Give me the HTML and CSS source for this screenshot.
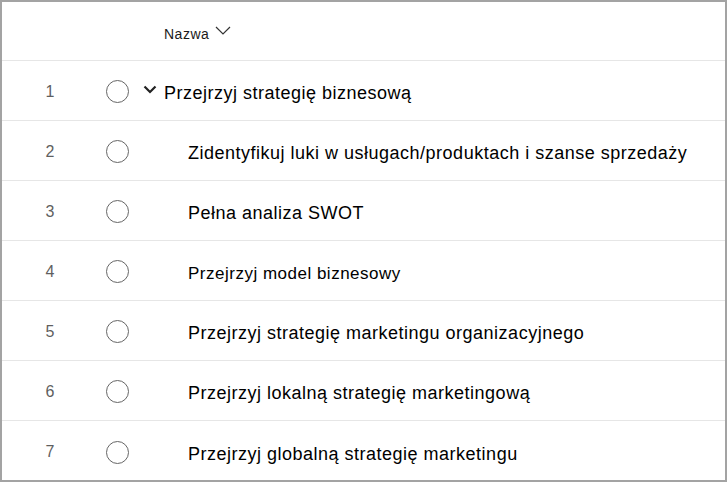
FILE: index.html
```html
<!DOCTYPE html>
<html lang="pl">
<head>
<meta charset="utf-8">
<link rel="stylesheet" href="styles.css">
</head>
<body>
<div class="frame">
  <div class="header">
    <span class="hcol">Nazwa</span>
    <svg class="hchev" width="16" height="9" viewBox="0 0 16 9"><path d="M1 1 L8 8 L15 1" fill="none" stroke="#333" stroke-width="1.2"/></svg>
  </div>
  <div class="row">
    <span class="num">1</span>
    <span class="circle"></span>
    <svg class="rchev" width="14" height="9" viewBox="0 0 14 9"><path d="M1.5 1.5 L7 7 L12.5 1.5" fill="none" stroke="#222" stroke-width="2.2"/></svg>
    <span class="title parent">Przejrzyj strategię biznesową</span>
  </div>
  <div class="row">
    <span class="num">2</span>
    <span class="circle"></span>
    <span class="title child">Zidentyfikuj luki w usługach/produktach i szanse sprzedaży</span>
  </div>
  <div class="row">
    <span class="num">3</span>
    <span class="circle"></span>
    <span class="title child">Pełna analiza SWOT</span>
  </div>
  <div class="row">
    <span class="num">4</span>
    <span class="circle"></span>
    <span class="title child small">Przejrzyj model biznesowy</span>
  </div>
  <div class="row">
    <span class="num">5</span>
    <span class="circle"></span>
    <span class="title child">Przejrzyj strategię marketingu organizacyjnego</span>
  </div>
  <div class="row">
    <span class="num">6</span>
    <span class="circle"></span>
    <span class="title child">Przejrzyj lokalną strategię marketingową</span>
  </div>
  <div class="row last">
    <span class="num">7</span>
    <span class="circle"></span>
    <span class="title child">Przejrzyj globalną strategię marketingu</span>
  </div>
</div>
</body>
</html>
```
FILE: styles.css
```css
html, body {
  margin: 0;
  padding: 0;
  background: #fff;
}
.frame {
  width: 727px;
  height: 482px;
  box-sizing: border-box;
  border: 2px solid #a3a3a3;
  font-family: "Liberation Sans", Arial, sans-serif;
  color: #000;
  overflow: hidden;
}
.header {
  height: 58px;
  border-bottom: 1px solid #e6e6e6;
  display: flex;
  align-items: center;
  padding-left: 162px;
  box-sizing: content-box;
}
.hcol {
  font-size: 14px;
  letter-spacing: 0.5px;
  color: #1a1a1a;
  margin-top: 6px;
}
.hchev {
  margin-left: 6px;
  margin-bottom: 2px;
}
.row {
  height: 60px;
  border-bottom: 1px solid #e6e6e6;
  display: flex;
  align-items: center;
  padding-top: 5px;
  box-sizing: border-box;
}
.row.last {
  border-bottom: none;
}
.num {
  width: 96px;
  text-align: center;
  font-size: 16px;
  color: #5f5f5f;
  margin-top: -3px;
}
.circle {
  width: 21px;
  height: 21px;
  border: 1.5px solid #666;
  border-radius: 50%;
  margin-left: 8px;
  margin-top: -3px;
}
.rchev {
  margin-left: 14px;
  margin-top: -8px;
}
.title {
  font-size: 18px;
  letter-spacing: 0.5px;
  margin-top: 1px;
}
.parent {
  margin-left: 7px;
}
.child {
  margin-left: 59px;
}
.small {
  font-size: 17px;
}
```
